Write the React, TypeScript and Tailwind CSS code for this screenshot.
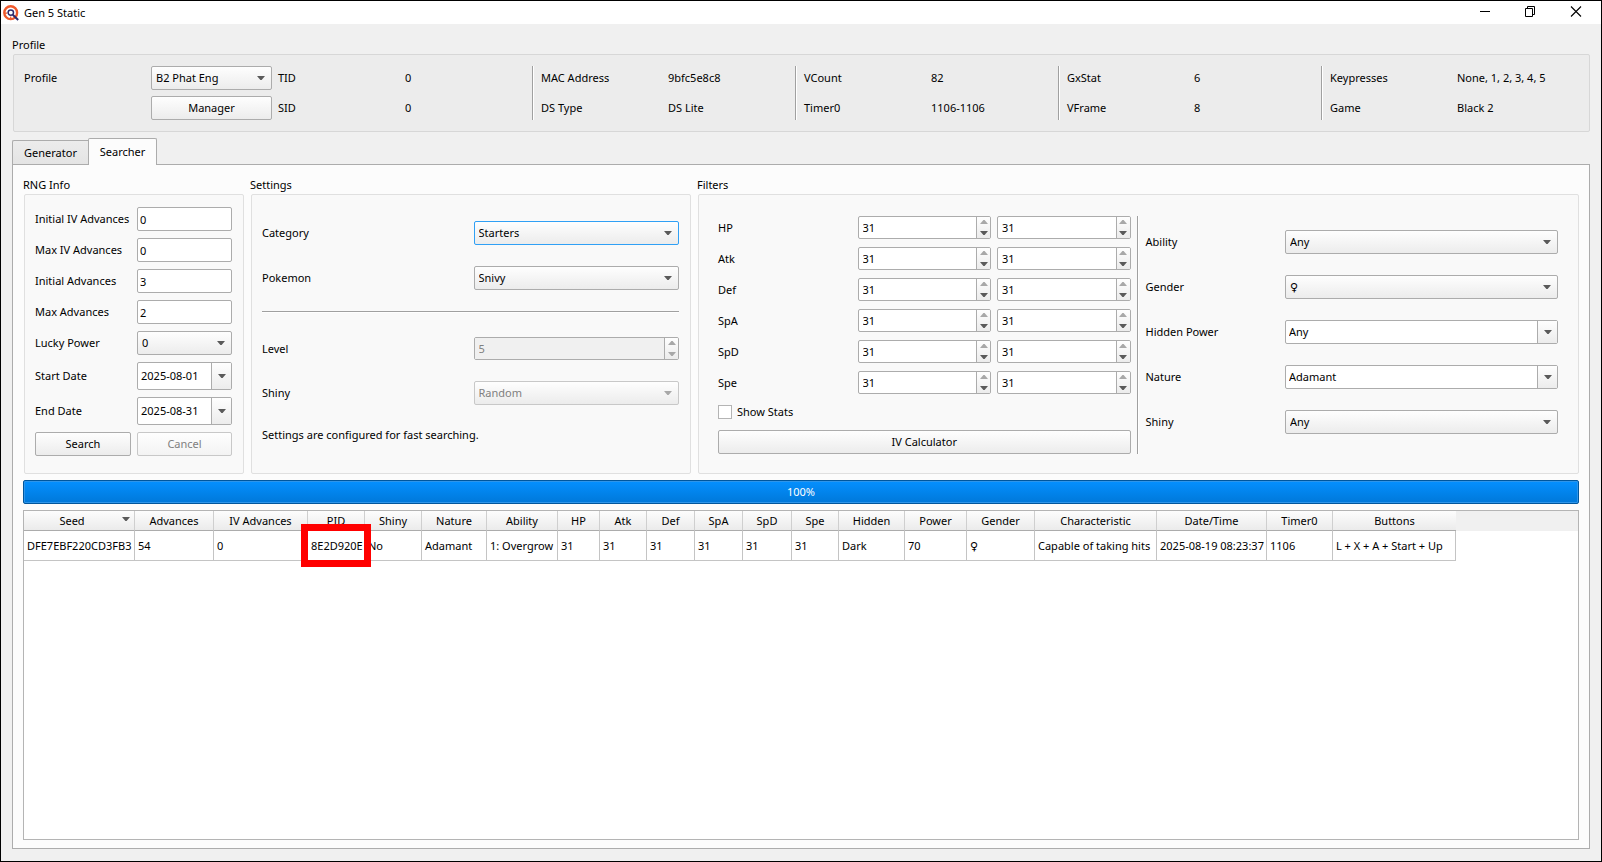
import { useId } from "react";
import type { ReactNode } from "react";
import clsx from "clsx";

const PROFILE_FIELDS = [
    [{ label: "MAC Address", value: "9bfc5e8c8" }, { label: "DS Type", value: "DS Lite" }],
    [{ label: "VCount", value: "82" }, { label: "Timer0", value: "1106-1106" }],
    [{ label: "GxStat", value: "6" }, { label: "VFrame", value: "8" }],
    [{ label: "Keypresses", value: "None, 1, 2, 3, 4, 5" }, { label: "Game", value: "Black 2" }],
];

const RNG_FIELDS = [
    { label: "Initial IV Advances", value: "0" },
    { label: "Max IV Advances", value: "0" },
    { label: "Initial Advances", value: "3" },
    { label: "Max Advances", value: "2" },
];

const STATS = ["HP", "Atk", "Def", "SpA", "SpD", "Spe"];

const COLUMNS = [
    { name: "Seed", width: 111, value: "DFE7EBF220CD3FB3" },
    { name: "Advances", width: 79, value: "54" },
    { name: "IV Advances", width: 94, value: "0" },
    { name: "PID", width: 57, value: "8E2D920E" },
    { name: "Shiny", width: 57, value: "No" },
    { name: "Nature", width: 65, value: "Adamant" },
    { name: "Ability", width: 71, value: "1: Overgrow" },
    { name: "HP", width: 42, value: "31" },
    { name: "Atk", width: 47, value: "31" },
    { name: "Def", width: 48, value: "31" },
    { name: "SpA", width: 48, value: "31" },
    { name: "SpD", width: 49, value: "31" },
    { name: "Spe", width: 47, value: "31" },
    { name: "Hidden", width: 66, value: "Dark" },
    { name: "Power", width: 62, value: "70" },
    { name: "Gender", width: 68, value: "♀" },
    { name: "Characteristic", width: 122, value: "Capable of taking hits" },
    { name: "Date/Time", width: 110, value: "2025-08-19 08:23:37" },
    { name: "Timer0", width: 66, value: "1106" },
    { name: "Buttons", width: 123, value: "L + X + A + Start + Up" },
];

export default function App() {
    return (
        <div className="flex min-h-screen flex-col border border-black bg-[#f0f0f0] font-['Noto_Sans','DejaVu_Sans',sans-serif] text-[11px] leading-[18px] text-black">
            <TitleBar />
            <main className="flex flex-1 flex-col px-[11px] pt-3 pb-3">
                <ProfileBox />
                <Tabs />
                <div className="flex flex-1 flex-col gap-1.5 border border-[#acacac] bg-[#fcfcfc] px-2.5 pt-[11px] pb-2">
                    <div className="grid grid-cols-[221px_1fr_2fr] gap-x-1.5">
                        <RngInfo />
                        <Settings />
                        <Filters />
                    </div>
                    <div
                        role="progressbar"
                        aria-valuenow={100}
                        className="flex h-6 items-center justify-center rounded-xs border border-[#00569c] bg-linear-to-b from-[#0590ff] to-[#0078d9] text-white inset-ring inset-ring-[#2e95ea]"
                    >
                        100%
                    </div>
                    <Results />
                </div>
            </main>
        </div>
    );
}

function TitleBar() {
    return (
        <header className="flex h-[23px] items-center bg-white pr-0.5 pl-0.5">
            <svg className="h-4 w-4" viewBox="0 0 16 16" fill="none">
                <circle cx="7.7" cy="7.7" r="6.4" stroke="#f0592b" strokeWidth="2.4" />
                <path d="M1.3 8.2h3M7.7 14v-2.4" stroke="#f0592b" strokeWidth="1.2" />
                <circle cx="7.8" cy="7.6" r="2.7" fill="#fff" stroke="#2f2a6b" strokeWidth="1.5" />
                <path d="M9.8 9.8l5.4 5.2" stroke="#2f2a6b" strokeWidth="2" />
            </svg>
            <h1 className="ml-[5px] flex-1">Gen 5 Static</h1>
            <button aria-label="Minimize" className="flex w-[46px] justify-center pb-0.5">
                <svg className="h-3 w-3" viewBox="0 0 12 12" fill="none" stroke="#000">
                    <path d="M2 5.5h10" />
                </svg>
            </button>
            <button aria-label="Restore" className="flex w-[46px] justify-center pb-0.5">
                <svg className="h-3 w-3" viewBox="0 0 12 12" fill="none" stroke="#000">
                    <path d="M1.5 2.5h7v8h-7zM3.5 2.5v-2h7v8h-2" />
                </svg>
            </button>
            <button aria-label="Close" className="flex w-[46px] justify-center pb-0.5">
                <svg className="h-3 w-3" viewBox="0 0 12 12" fill="none" stroke="#000" strokeWidth="1.1">
                    <path d="M1 .5l10 10M11 .5l-10 10" />
                </svg>
            </button>
        </header>
    );
}

function ProfileBox() {
    const id = useId();

    return (
        <GroupBox title="Profile" className="border-[#d7d7d7] bg-[#ececec] py-[11px] pr-[11px] pl-2.5">
            <div className="grid grid-cols-[repeat(4,1fr)_3px_1fr_1fr_3px_1fr_1fr_3px_1fr_1fr_3px_1fr_1fr] gap-x-1.5">
                <label htmlFor={id} className="py-[3px]">Profile</label>
                <div className="flex flex-col gap-1.5">
                    <Combo id={id} value="B2 Phat Eng" />
                    <Button>Manager</Button>
                </div>
                <TextPair top="TID" bottom="SID" />
                <TextPair top="0" bottom="0" />
                {PROFILE_FIELDS.map(([a, b]) => (
                    <div key={a.label} className="contents">
                        <VLine />
                        <TextPair top={a.label} bottom={b.label} />
                        <TextPair top={a.value} bottom={b.value} />
                    </div>
                ))}
            </div>
        </GroupBox>
    );
}

function Tabs() {
    return (
        <div role="tablist" className="relative mt-1.5 -mb-px flex h-[27px] items-end">
            <button
                role="tab"
                aria-selected={false}
                className="h-[25px] w-[76px] rounded-tl-xs border border-r-0 border-[#acacac] bg-linear-to-b from-[#ececec] to-[#e4e4e4]"
            >
                Generator
            </button>
            <button
                role="tab"
                aria-selected
                className="h-[27px] w-[69px] rounded-t-xs border border-b-0 border-[#acacac] bg-[#fcfcfc]"
            >
                Searcher
            </button>
        </div>
    );
}

function RngInfo() {
    const id = useId();

    return (
        <GroupBox title="RNG Info" className="border-[#e0e0e0] bg-[#f9f9f9] py-3 pr-[11px] pl-2.5">
            <div className="grid grid-cols-[96px_1fr] items-center gap-x-1.5 gap-y-[7px] whitespace-nowrap">
                {RNG_FIELDS.map(({ label, value }) => (
                    <div key={label} className="contents">
                        <label htmlFor={id + label}>{label}</label>
                        <input
                            id={id + label}
                            defaultValue={value}
                            className="h-6 w-full min-w-0 rounded-xs border border-[#acacac] bg-white px-0.5"
                        />
                    </div>
                ))}
                <label htmlFor={id + "power"}>Lucky Power</label>
                <Combo id={id + "power"} value="0" />
                <label htmlFor={id + "start"}>Start Date</label>
                <DateBox id={id + "start"} value="2025-08-01" />
                <label htmlFor={id + "end"}>End Date</label>
                <DateBox id={id + "end"} value="2025-08-31" />
                <Button>Search</Button>
                <Button disabled>Cancel</Button>
            </div>
        </GroupBox>
    );
}

function Settings() {
    const id = useId();

    return (
        <GroupBox title="Settings" className="border-[#e0e0e0] bg-[#f9f9f9] pt-[26px] pr-[11px] pl-2.5">
            <div className="grid grid-cols-2 items-center gap-x-1.5 gap-y-[21px]">
                <label htmlFor={id + "category"}>Category</label>
                <Combo id={id + "category"} value="Starters" focused />
                <label htmlFor={id + "pokemon"}>Pokemon</label>
                <Combo id={id + "pokemon"} value="Snivy" />
                <hr className="col-span-2 mb-[3px] h-0.5 border-t border-b border-t-[#a0a0a0] border-b-white" />
                <label htmlFor={id + "level"}>Level</label>
                <Spinner id={id + "level"} value={5} disabled />
                <label htmlFor={id + "shiny"}>Shiny</label>
                <Combo id={id + "shiny"} value="Random" disabled />
                <p className="col-span-2">Settings are configured for fast searching.</p>
            </div>
        </GroupBox>
    );
}

function Filters() {
    const id = useId();

    return (
        <GroupBox title="Filters" className="border-[#e0e0e0] bg-[#f9f9f9] pt-[21px] pr-5 pb-[19px] pl-[19px]">
            <div className="grid grid-cols-[1fr_3px_1fr] gap-x-1.5">
                <div className="grid grid-cols-3 items-center gap-x-1.5 gap-y-2">
                    {STATS.map((stat) => (
                        <div key={stat} className="contents">
                            <label htmlFor={id + stat}>{stat}</label>
                            <Spinner id={id + stat} value={31} />
                            <Spinner value={31} label={`${stat} maximum`} />
                        </div>
                    ))}
                    <label className="col-span-3 flex h-5 items-center gap-[5px]">
                        <input type="checkbox" className="h-3.5 w-3.5 appearance-none border border-[#b4b4b4] bg-white" />
                        Show Stats
                    </label>
                    <Button className="col-span-3">IV Calculator</Button>
                </div>
                <VLine />
                <div className="grid grid-cols-3 content-start items-center gap-x-1.5 gap-y-[21px] pt-3.5">
                    <label htmlFor={id + "ability"}>Ability</label>
                    <Combo id={id + "ability"} value="Any" className="col-span-2" />
                    <label htmlFor={id + "gender"}>Gender</label>
                    <Combo id={id + "gender"} value="♀" className="col-span-2" />
                    <label htmlFor={id + "hidden"}>Hidden Power</label>
                    <Combo id={id + "hidden"} value="Any" editable className="col-span-2" />
                    <label htmlFor={id + "nature"}>Nature</label>
                    <Combo id={id + "nature"} value="Adamant" editable className="col-span-2" />
                    <label htmlFor={id + "shiny"}>Shiny</label>
                    <Combo id={id + "shiny"} value="Any" className="col-span-2" />
                </div>
            </div>
        </GroupBox>
    );
}

function Results() {
    return (
        <div className="flex-1 border border-[#b4b4b4] bg-white">
            <table className="w-full table-fixed border-separate border-spacing-0 whitespace-nowrap">
                <colgroup>
                    {COLUMNS.map(({ name, width }) => (
                        <col key={name} style={{ width }} />
                    ))}
                    <col />
                </colgroup>
                <thead>
                    <tr className="h-5">
                        {COLUMNS.map(({ name }) => (
                            <th
                                key={name}
                                className={clsx(
                                    "relative border-b border-b-[#acacac] bg-linear-to-b from-[#fdfdfd] to-[#ebebeb] p-0 font-normal",
                                    name !== "Buttons" && "border-r border-r-[#cfcfcf]",
                                    name === "Seed" && "pr-3.5"
                                )}
                            >
                                {name}
                                {name === "Seed" && (
                                    <Triangle className="absolute top-1.5 right-1 text-[#5a5a5a]" />
                                )}
                            </th>
                        ))}
                        <th className="bg-[#f0f0f0] p-0" />
                    </tr>
                </thead>
                <tbody>
                    <tr className="h-[30px]">
                        {COLUMNS.map(({ name, value }) => (
                            <td key={name} className="relative border-r border-b border-[#c4c4c4] p-0 pl-[3px]">
                                {value}
                                {name === "PID" && (
                                    <span className="absolute -inset-[7px] z-10 border-[7px] border-[#ff0000]" />
                                )}
                            </td>
                        ))}
                        <td className="p-0" />
                    </tr>
                </tbody>
            </table>
        </div>
    );
}

/**
 * Shared widgets
 */
function GroupBox({ title, className, children }: { title: string; className?: string; children: ReactNode }) {
    return (
        <section className="flex flex-col">
            <h2>{title}</h2>
            <div className={clsx("ml-px flex-1 rounded-xs border", className)}>{children}</div>
        </section>
    );
}

function TextPair({ top, bottom }: { top: string; bottom: string }) {
    return (
        <div className="flex flex-col gap-3 py-[3px] whitespace-nowrap">
            <span>{top}</span>
            <span>{bottom}</span>
        </div>
    );
}

function VLine() {
    return <div className="w-0.5 border-r border-l border-r-white border-l-[#a0a0a0]" />;
}

function Triangle({ up, className = "text-[#5a5a5a]" }: { up?: boolean; className?: string }) {
    return (
        <svg className={clsx("h-1 w-2 fill-current", className, up && "rotate-180")} viewBox="0 0 8 4">
            <path d="M0 0h8L4.6 4H3.4z" />
        </svg>
    );
}

interface ButtonProps {
    children: ReactNode;
    disabled?: boolean;
    className?: string;
}

function Button({ children, disabled, className }: ButtonProps) {
    return (
        <button
            disabled={disabled}
            className={clsx(
                "h-6 rounded-xs border border-[#acacac] bg-linear-to-b from-[#fefefe] to-[#ececec] disabled:border-[#c8c8c8] disabled:to-[#f3f3f3] disabled:text-[#808080]",
                className
            )}
        >
            {children}
        </button>
    );
}

interface ComboProps {
    id: string;
    value: string;
    editable?: boolean;
    disabled?: boolean;
    focused?: boolean;
    className?: string;
}

function Combo({ id, value, editable, disabled, focused, className }: ComboProps) {
    return (
        <div className={clsx("relative", className)}>
            <select
                id={id}
                disabled={disabled}
                className={clsx(
                    "block h-6 w-full appearance-none rounded-xs border text-black disabled:border-[#c8c8c8] disabled:text-[#808080] disabled:opacity-100",
                    editable ? "bg-white pl-[3px]" : "bg-linear-to-b from-[#fefefe] to-[#ececec] pl-1",
                    focused ? "border-[#30a0f5]" : "border-[#acacac]"
                )}
            >
                <option>{value}</option>
            </select>
            <span
                className={clsx(
                    "pointer-events-none absolute inset-y-px right-px flex w-5 items-center justify-center",
                    editable && "border-l border-[#acacac] bg-linear-to-b from-[#fefefe] to-[#ececec]"
                )}
            >
                <Triangle className={disabled ? "text-[#a8a8a8]" : "text-[#5a5a5a]"} />
            </span>
        </div>
    );
}

function DateBox({ id, value }: { id: string; value: string }) {
    return (
        <div className="flex h-7 overflow-hidden rounded-xs border border-[#acacac] bg-white">
            <input id={id} defaultValue={value} className="min-w-0 flex-1 pl-[3px]" />
            <button
                aria-label="Open calendar"
                className="flex w-5 items-center justify-center border-l border-[#acacac] bg-linear-to-b from-[#fefefe] to-[#ececec]"
            >
                <Triangle />
            </button>
        </div>
    );
}

interface SpinnerProps {
    id?: string;
    value: number;
    label?: string;
    disabled?: boolean;
}

function Spinner({ id, value, label, disabled }: SpinnerProps) {
    return (
        <div className="flex h-[23px] overflow-hidden rounded-xs border border-[#acacac] bg-white">
            <input
                id={id}
                type="number"
                aria-label={label}
                defaultValue={value}
                disabled={disabled}
                className="min-w-0 flex-1 appearance-none pl-1 [appearance:textfield] disabled:bg-[#f0f0f0] disabled:text-[#808080]"
            />
            <div className="flex w-3.5 flex-col items-center border-l border-[#acacac] bg-linear-to-b from-[#fefefe] to-[#ececec]">
                <button aria-label="Increase" disabled={disabled} className="flex flex-1 items-center">
                    <Triangle up className="text-[#a8a8a8]" />
                </button>
                <button aria-label="Decrease" disabled={disabled} className="flex flex-1 items-center">
                    <Triangle className={disabled ? "text-[#a8a8a8]" : "text-[#5a5a5a]"} />
                </button>
            </div>
        </div>
    );
}
